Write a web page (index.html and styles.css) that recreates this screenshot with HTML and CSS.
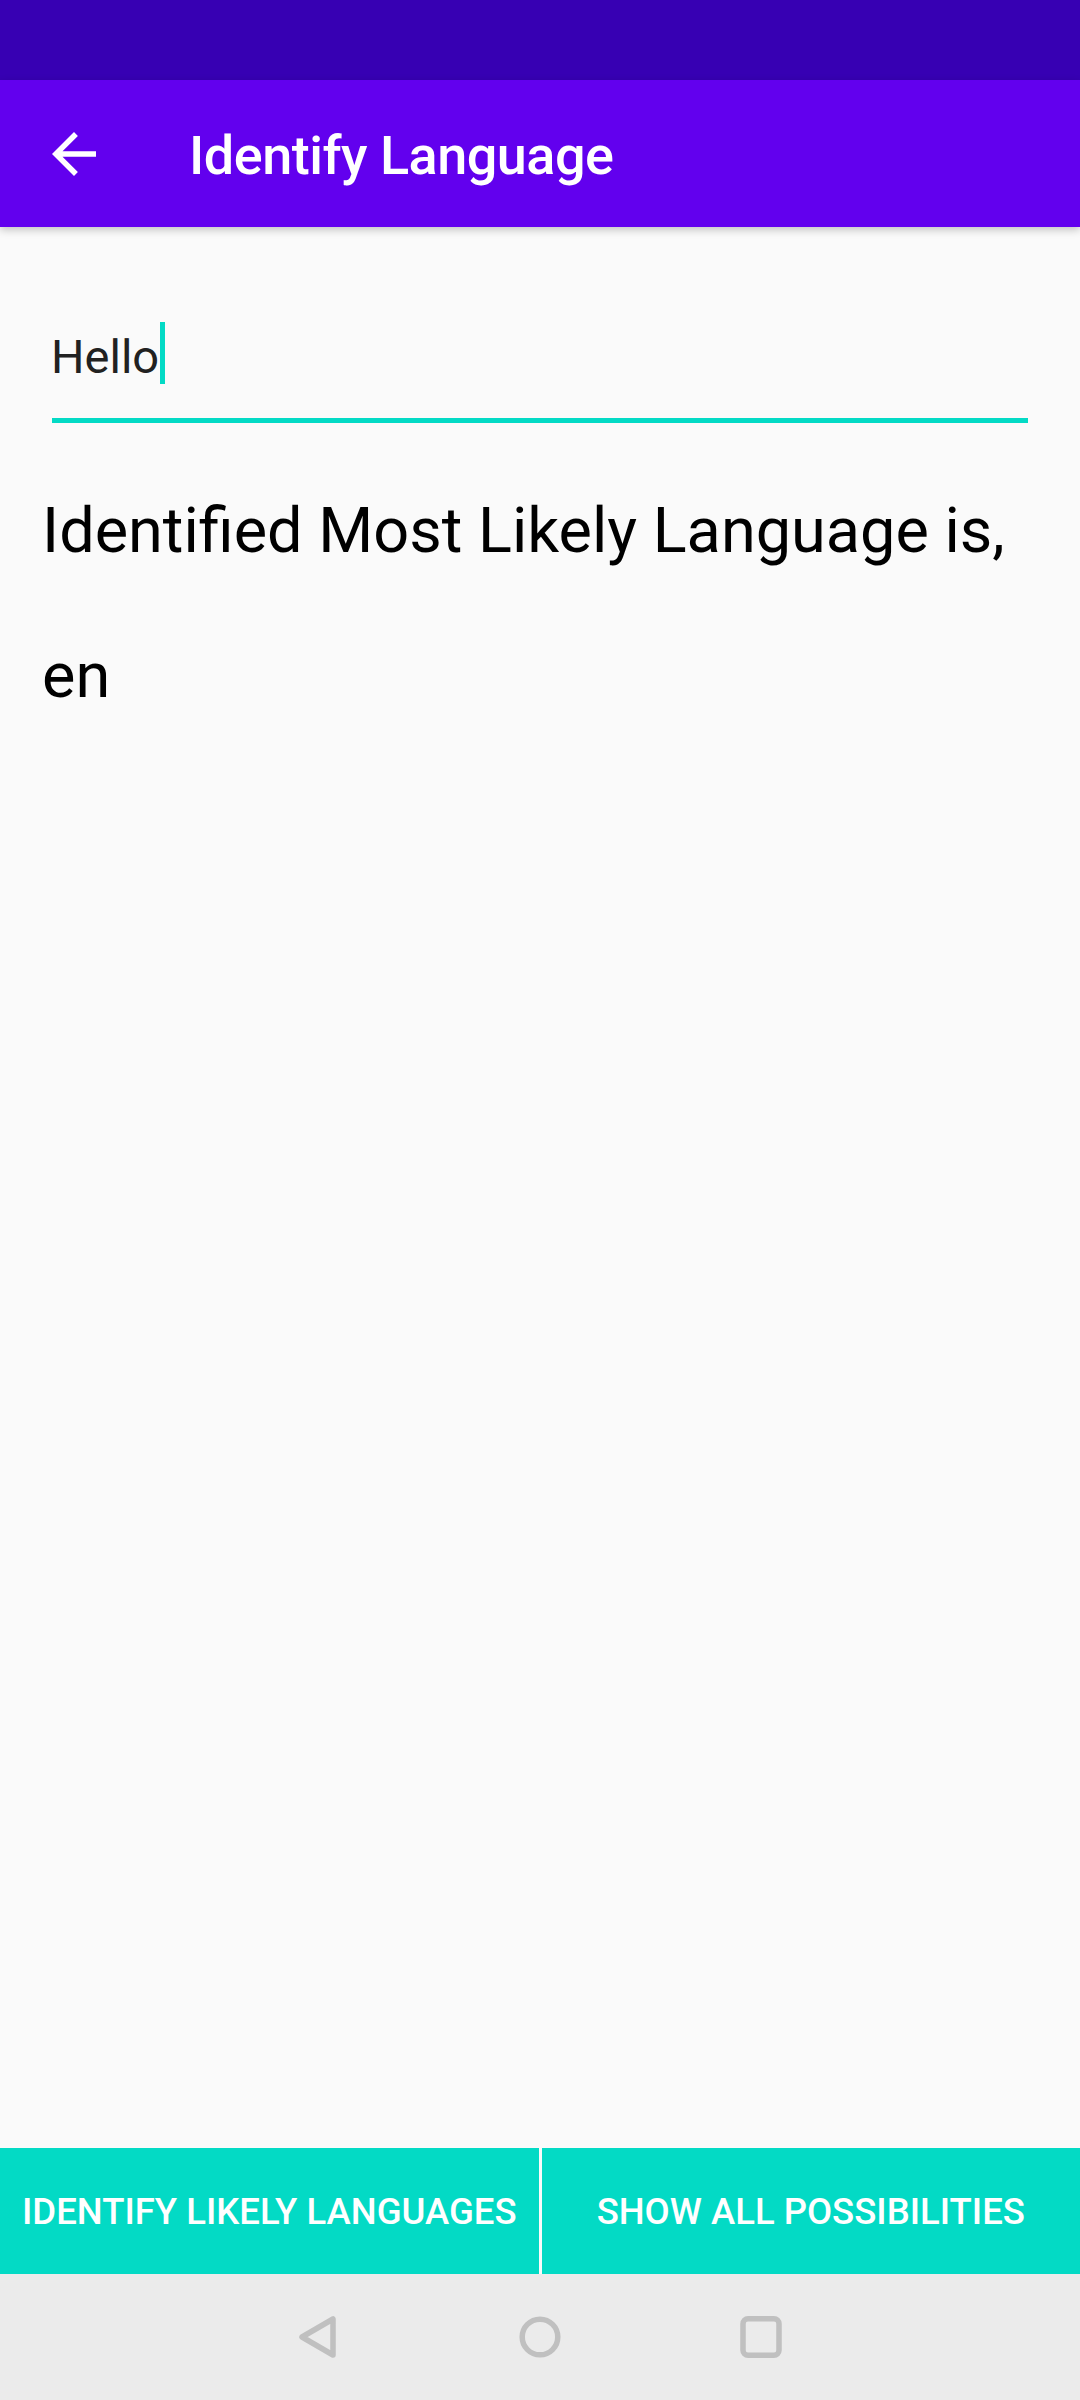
FILE: index.html
```html
<!DOCTYPE html>
<html lang="en">
<head>
<meta charset="utf-8">
<title>Identify Language</title>
<link rel="stylesheet" href="styles.css">
</head>
<body>
<div class="screen">
  <div class="status-bar"></div>
  <header class="app-bar">
    <svg class="back" width="66" height="66" viewBox="0 0 24 24"><path d="M20 11H7.83l5.59-5.59L12 4l-8 8 8 8 1.41-1.41L7.83 13H20v-2z" fill="#fff"/></svg>
    <h1 class="title">Identify Language</h1>
  </header>
  <main class="content">
    <div class="field">
      <span class="field-text">Hello</span><span class="cursor"></span>
    </div>
    <p class="result-label">Identified Most Likely Language is,</p>
    <p class="result-value">en</p>
  </main>
  <div class="actions">
    <button class="action">IDENTIFY LIKELY LANGUAGES</button>
    <button class="action">SHOW ALL POSSIBILITIES</button>
  </div>
  <nav class="nav-bar">
    <svg class="nav-icon" width="44" height="44" viewBox="0 0 44 44"><path d="M36 4 L36 40 L5 22 Z" fill="none" stroke="#c0c0c0" stroke-width="5.5" stroke-linejoin="round"/></svg>
    <svg class="nav-icon" width="44" height="44" viewBox="0 0 44 44"><circle cx="22" cy="22" r="17.8" fill="none" stroke="#c0c0c0" stroke-width="5.5"/></svg>
    <svg class="nav-icon" width="44" height="44" viewBox="0 0 44 44"><rect x="4" y="3.8" width="36" height="36.4" rx="5" fill="none" stroke="#c0c0c0" stroke-width="5.5"/></svg>
  </nav>
</div>
</body>
</html>
```
FILE: styles.css
```css
html, body {
  margin: 0;
  padding: 0;
}
body {
  width: 1080px;
  height: 2400px;
  font-family: Roboto, "Noto Sans", "Liberation Sans", sans-serif;
  background: #fafafa;
}
.screen {
  width: 1080px;
  height: 2400px;
  display: flex;
  flex-direction: column;
}
.status-bar {
  height: 80px;
  background: #3700b3;
  flex: none;
}
.app-bar {
  height: 147px;
  flex: none;
  background: #6200ee;
  display: flex;
  align-items: center;
  box-shadow: 0 3px 8px rgba(0,0,0,0.22);
  position: relative;
  z-index: 1;
}
.back {
  margin-left: 41px;
}
.title {
  margin: 0 0 0 82px;
  padding-top: 3px;
  font-size: 54px;
  line-height: 55px;
  letter-spacing: -0.5px;
  font-weight: 500;
  color: #fff;
}
.content {
  flex: 1;
  background: #fafafa;
  padding: 0 52px 0 42px;
}
.field {
  margin: 95px 0 0 10px;
  border-bottom: 5px solid #03dac5;
  display: flex;
  align-items: flex-start;
  box-sizing: border-box;
  height: 101px;
}
.field-text {
  font-size: 47px;
  line-height: 47px;
  color: #212121;
  margin-top: 11px;
  margin-left: -1px;
}
.cursor {
  width: 5px;
  height: 62px;
  background: #03dac5;
  margin-left: 1px;
}
.result-label {
  margin: 73px 0 0 0;
  font-size: 63px;
  line-height: 70px;
  color: #000;
}
.result-value {
  margin: 75px 0 0 0;
  font-size: 63px;
  line-height: 70px;
  color: #000;
}
.actions {
  height: 126px;
  flex: none;
  display: flex;
  gap: 3px;
  background: #fafafa;
}
.action {
  flex: 1;
  border: 0;
  margin: 0;
  padding: 0;
  background: #03dac5;
  color: #fff;
  font-family: Roboto, "Noto Sans", sans-serif;
  font-weight: 500;
  font-size: 36.5px;
  letter-spacing: 0;
}
.nav-bar {
  height: 126px;
  flex: none;
  background: #ebebeb;
  display: flex;
  justify-content: center;
  align-items: center;
  gap: 177px;
}
```
